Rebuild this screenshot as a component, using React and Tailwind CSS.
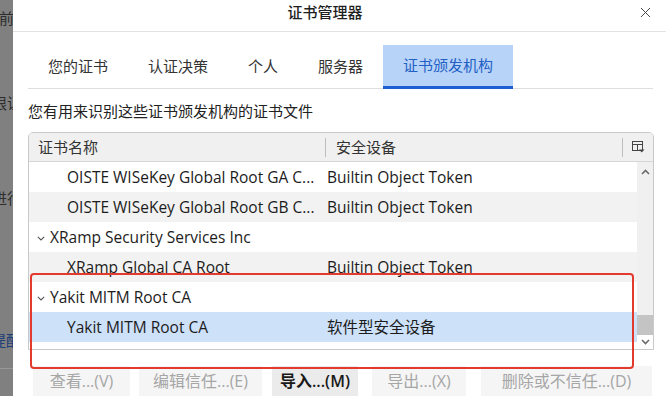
import React from "react";
import { X } from "lucide-react";

const rows = [
  { kind: "child", name: "OISTE WISeKey Global Root GA C...", device: "Builtin Object Token", tone: "white" },
  { kind: "child", name: "OISTE WISeKey Global Root GB C...", device: "Builtin Object Token", tone: "gray" },
  { kind: "group", name: "XRamp Security Services Inc", tone: "white" },
  { kind: "child", name: "XRamp Global CA Root", device: "Builtin Object Token", tone: "gray" },
  { kind: "group", name: "Yakit MITM Root CA", tone: "white" },
  { kind: "child", name: "Yakit MITM Root CA", device: "软件型安全设备", tone: "selected" },
];

const tabs = ["您的证书", "认证决策", "个人", "服务器", "证书颁发机构"];

const buttons = [
  { label: "查看...(V)", w: "w-[97px]", ml: "ml-0" },
  { label: "编辑信任...(E)", w: "w-[123px]", ml: "ml-[9px]" },
  { label: "导入...(M)", w: "w-[86px]", ml: "ml-[10px]", active: true },
  { label: "导出...(X)", w: "w-[94px]", ml: "ml-[14px]" },
  { label: "删除或不信任...(D)", w: "w-[171px]", ml: "ml-[15px]" },
];

const toneClass = {
  white: "bg-white",
  gray: "bg-[#f2f2f2]",
  selected: "bg-[#cde1f9]",
};

const Chevron = ({ up }) => (
  <svg width="9" height="6" viewBox="0 0 9 6" className="block">
    <path
      d={up ? "M1 5 L4.5 1.5 L8 5" : "M1 1 L4.5 4.5 L8 1"}
      fill="none"
      stroke="#6b6b6b"
      strokeWidth="1.6"
    />
  </svg>
);

const ColumnsIcon = () => (
  <svg width="13" height="12" viewBox="0 0 13 12" className="block">
    <rect x="0.5" y="0.5" width="10" height="9" fill="none" stroke="#444" />
    <line x1="0.5" y1="3.5" x2="10.5" y2="3.5" stroke="#444" />
    <line x1="5.5" y1="3.5" x2="5.5" y2="9.5" stroke="#444" />
    <path d="M7 8.5 H12.5 L9.75 11.5 Z" fill="#444" />
  </svg>
);

export default function App() {
  return (
    <div className="w-[666px] h-[396px] overflow-hidden flex font-['Open_Sans','Noto_Sans_CJK_SC',sans-serif] text-[#222]">
      {/* page behind the overlay, clipped by the dialog */}
      <div className="w-[13px] shrink-0 bg-[#808080] overflow-hidden flex flex-col text-[15px] leading-[20px] text-[#2e2e2e] whitespace-nowrap">
        <div className="mt-[8px] ml-[-1px]">前端</div>
        <div className="mt-[65px] ml-[-8px]">限证</div>
        <div className="mt-[75px] ml-[-8px]">进行</div>
        <div className="mt-[122px] ml-[-9px] text-[#1e3f78]">提醒</div>
        <div className="mt-[18px] h-px bg-[#989898]"></div>
      </div>

      {/* dialog */}
      <div className="flex-1 bg-white relative flex flex-col">
        <div className="h-[32px] shrink-0 border-b border-[#e2e2e2] flex items-center justify-center relative">
          <span className="text-[15px] font-medium text-[#1e1e1e] mt-[-7px] ml-[-29px]">证书管理器</span>
          <X className="absolute right-[12px] top-[4px] text-[#444]" size={17} strokeWidth={1.4} />
        </div>

        <div className="mt-[13px] ml-[15px] mr-[13px] h-[44px] border-b border-[#dedede] flex">
          {tabs.map((t, i) =>
            i === tabs.length - 1 ? (
              <div
                key={t}
                className="px-5 h-[44px] bg-[#b8d3f8] border-b-[3px] border-[#1b5fd3] flex items-center text-[15px] text-[#2160c4]"
              >
                {t}
              </div>
            ) : (
              <div key={t} className="px-5 h-[43px] flex items-center text-[15px] text-[#333]">
                {t}
              </div>
            )
          )}
        </div>

        <div className="ml-[15px] h-[44px] flex items-center pt-[2px] text-[15px] text-[#222]">
          您有用来识别这些证书颁发机构的证书文件
        </div>

        {/* certificate table */}
        <div className="ml-[15px] w-[626px] h-[221px] border border-[#c9c9c9] rounded-t-[5px] overflow-hidden flex flex-col">
          <div className="h-[29px] shrink-0 bg-[#f0f0f0] border-b border-[#d6d6d6] flex items-center text-[15px] text-[#333]">
            <div className="w-[296px] pl-[9px]">证书名称</div>
            <div className="w-px h-[19px] bg-[#bdbdbd]"></div>
            <div className="w-[296px] pl-[10px]">安全设备</div>
            <div className="w-px h-[19px] bg-[#bdbdbd]"></div>
            <div className="flex-1 flex justify-center pl-[1px]">
              <ColumnsIcon />
            </div>
          </div>

          <div className="flex flex-1">
            <div className="w-[608px] flex flex-col">
              {rows.map((r, i) => (
                <div
                  key={i}
                  className={`h-[30px] shrink-0 flex items-center text-[15.5px] text-[#1c1c1c] whitespace-nowrap ${toneClass[r.tone]}`}
                >
                  {r.kind === "group" ? (
                    <div className="flex items-center pl-[8px]">
                      <svg width="8" height="5" viewBox="0 0 8 5" className="mr-[5px] mt-[2px]">
                        <path d="M0.8 0.8 L4 4 L7.2 0.8" fill="none" stroke="#555" strokeWidth="1.1" />
                      </svg>
                      {r.name}
                    </div>
                  ) : (
                    <>
                      <div className="w-[298px] pl-[38px] overflow-hidden">{r.name}</div>
                      <div>{r.device}</div>
                    </>
                  )}
                </div>
              ))}
            </div>
            <div className="flex-1 bg-[#f0f0f0] flex flex-col items-center">
              <div className="mt-[7px]">
                <Chevron up />
              </div>
              <div className="flex-1"></div>
              <div className="w-full h-[20px] bg-[#c4c4c4]"></div>
              <div className="h-[14px] w-full bg-white flex items-center justify-center">
                <Chevron />
              </div>
            </div>
          </div>
        </div>

        {/* action buttons */}
        <div className="mt-[16px] ml-[20px] flex">
          {buttons.map((b) => (
            <div
              key={b.label}
              className={`${b.w} ${b.ml} h-[30px] shrink-0 flex items-center justify-center text-[16px] whitespace-nowrap ${
                b.active ? "bg-[#ebebeb] text-[#1a1a1a] font-semibold" : "bg-[#f5f5f5] text-[#a6a6a6]"
              }`}
            >
              {b.label}
            </div>
          ))}
        </div>

        {/* highlight box */}
        <div className="absolute left-[17px] top-[273px] w-[604px] h-[96px] border-2 border-[#e23a2e] rounded-[4px] pointer-events-none"></div>
      </div>
    </div>
  );
}
